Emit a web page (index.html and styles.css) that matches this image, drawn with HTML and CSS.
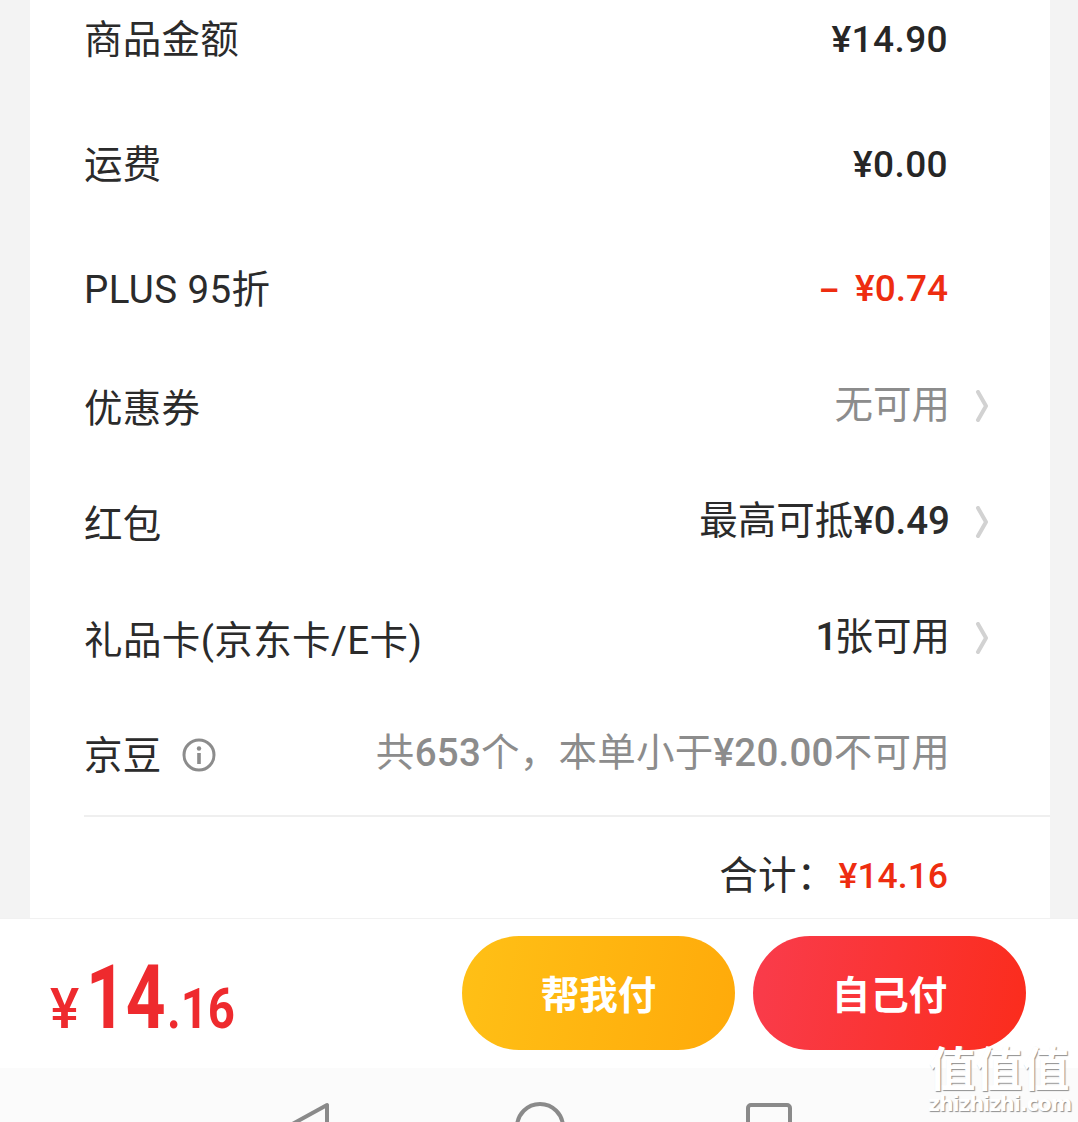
FILE: index.html
```html
<!DOCTYPE html>
<html lang="zh-CN">
<head>
    <meta charset="UTF-8">
    <meta name="viewport" content="width=device-width, initial-scale=1.0">
    <title>订单结算</title>
    <link rel="stylesheet" href="styles.css">
</head>
<body>
    <div class="page">
        <main class="card">
            <div class="row row-tall">
                <span class="label">商品金额</span>
                <span class="amount">¥14.90</span>
            </div>
            <div class="row row-tall">
                <span class="label">运费</span>
                <span class="amount">¥0.00</span>
            </div>
            <div class="row row-tall">
                <span class="label label-latin">PLUS 95折</span>
                <span class="amount amount-red amount-discount"><span class="minus">–</span>¥0.74</span>
            </div>
            <div class="row">
                <span class="label">优惠券</span>
                <span class="value value-grey">无可用</span>
                <svg class="chevron" viewBox="0 0 14 32"><path d="M3 2l8 14-8 14" fill="none" stroke="#d2d2d2" stroke-width="4" stroke-linecap="round" stroke-linejoin="round"/></svg>
            </div>
            <div class="row">
                <span class="label">红包</span>
                <span class="value">最高可抵<span class="num">¥0.49</span></span>
                <svg class="chevron" viewBox="0 0 14 32"><path d="M3 2l8 14-8 14" fill="none" stroke="#d2d2d2" stroke-width="4" stroke-linecap="round" stroke-linejoin="round"/></svg>
            </div>
            <div class="row">
                <span class="label label-latin">礼品卡(京东卡/E卡)</span>
                <span class="value"><span class="num num-one">1</span>张可用</span>
                <svg class="chevron" viewBox="0 0 14 32"><path d="M3 2l8 14-8 14" fill="none" stroke="#d2d2d2" stroke-width="4" stroke-linecap="round" stroke-linejoin="round"/></svg>
            </div>
            <div class="row row-beans">
                <span class="label">京豆</span>
                <svg class="info" viewBox="0 0 34 34">
                    <circle cx="17" cy="17" r="15" fill="none" stroke="#8c8c8c" stroke-width="3"/>
                    <circle cx="17" cy="10.5" r="2.2" fill="#8c8c8c"/>
                    <rect x="15.2" y="15" width="3.6" height="11" fill="#8c8c8c"/>
                </svg>
                <span class="value value-grey">共<span class="num">653</span>个，本单小于<span class="num">¥20.00</span>不可用</span>
            </div>
            <div class="total">
                <span class="total-label">合计：</span>
                <span class="amount amount-red amount-total">¥14.16</span>
            </div>
        </main>

        <footer class="paybar">
            <div class="price">
                <span class="price-sign">¥</span><span class="price-int">14</span><span class="price-dec">.16</span>
            </div>
            <div class="buttons">
                <button class="btn btn-yellow">帮我付</button>
                <button class="btn btn-red">自己付</button>
            </div>
        </footer>

        <nav class="navbar">
            <svg class="nav-back" viewBox="0 0 50 50"><path d="M44 3v44L4 25z" fill="none" stroke="#8a8a8a" stroke-width="4" stroke-linejoin="round"/></svg>
            <svg class="nav-home" viewBox="0 0 50 50"><circle cx="25" cy="25" r="23" fill="none" stroke="#8a8a8a" stroke-width="4"/></svg>
            <svg class="nav-recent" viewBox="0 0 50 50"><rect x="4" y="3" width="42" height="42" rx="3" fill="none" stroke="#8a8a8a" stroke-width="4"/></svg>
        </nav>

        <div class="watermark">
            <div class="wm-mark">值值值</div>
            <div class="wm-site">zhizhizhi.com</div>
        </div>
    </div>
</body>
</html>
```

FILE: styles.css
```css
* {
    box-sizing: border-box;
}
html, body {
    margin: 0;
    padding: 0;
}
body {
    font-family: Roboto, "Noto Sans CJK SC", sans-serif;
    background-color: #f3f3f3;
    color: #262626;
}
.page {
    position: relative;
    width: 1078px;
    height: 1122px;
    overflow: hidden;
    display: flex;
    flex-direction: column;
}
.card {
    height: 918px;
    margin: 0 28px 0 30px;
    padding-left: 54px;
    background-color: #fff;
    display: flex;
    flex-direction: column;
    justify-content: flex-end;
    flex-shrink: 0;
}
.row {
    height: 116px;
    flex-shrink: 0;
    display: flex;
    align-items: center;
    padding-right: 100px;
    position: relative;
}
.row-tall {
    height: 125px;
    padding-right: 102px;
}
.row-beans {
    height: 118px;
    padding-right: 100px;
}
.label {
    font-size: 38.5px;
    line-height: 50px;
    letter-spacing: 0.25px;
    color: #2b2b2b;
    margin-right: auto;
    padding-top: 4px;
}
.row-tall .label {
    padding-top: 6px;
}
.label-latin {
    letter-spacing: 0.4px;
}
.row-beans .label {
    margin-right: 20px;
    padding-top: 0;
}
.amount {
    font-size: 37px;
    font-weight: 500;
    line-height: 50px;
    letter-spacing: 0.4px;
    color: #262626;
    padding-top: 6px;
}
.amount-red {
    color: #ee2d10;
}
.amount-discount {
    letter-spacing: 0;
}
.minus {
    font-size: 32px;
    font-weight: 700;
    margin-right: 16px;
}
.value {
    font-size: 38.5px;
    line-height: 50px;
    color: #2b2b2b;
    padding-bottom: 4px;
}
.row-beans .value {
    margin-left: auto;
    padding-bottom: 6px;
    letter-spacing: 0.25px;
}
.value-grey {
    color: #8c8c8c;
}
.num {
    font-weight: 500;
}
.num-one {
    letter-spacing: -3px;
}
.chevron {
    position: absolute;
    right: 61px;
    top: 41px;
    width: 14px;
    height: 32px;
}
.info {
    width: 34px;
    height: 34px;
    margin-bottom: 2px;
}
.total {
    height: 103px;
    padding-right: 102px;
    padding-bottom: 17px;
    border-top: 2px solid #efefef;
    display: flex;
    align-items: flex-end;
    justify-content: flex-end;
    flex-shrink: 0;
}
.total-label {
    font-size: 38.5px;
    line-height: 50px;
    letter-spacing: 0.25px;
    color: #2b2b2b;
    margin-right: 3px;
}
.amount-total {
    font-size: 35.5px;
    letter-spacing: 0;
    padding-top: 0;
}
.paybar {
    height: 150px;
    flex-shrink: 0;
    background-color: #fff;
    border-top: 1px solid #f1f1f1;
    padding: 17px 52px 0 50px;
    display: flex;
    justify-content: space-between;
}
.price {
    color: #ee2a2e;
    font-weight: 500;
    display: flex;
    align-items: baseline;
    height: 100px;
    line-height: 1;
    padding-top: 17px;
}
.price-sign {
    font-size: 55px;
    margin-right: 7px;
}
.price-int {
    display: inline-block;
    width: 81px;
    font-size: 89px;
    font-weight: 700;
    transform: scaleX(0.78);
    transform-origin: left;
}
.price-dec {
    display: inline-block;
    width: 68px;
    font-size: 55px;
    font-weight: 700;
    transform: scaleX(0.86);
    transform-origin: left;
}
.buttons {
    display: flex;
    gap: 18px;
}
.btn {
    width: 273px;
    height: 114px;
    border: none;
    border-radius: 57px;
    color: #fff;
    font-family: "Noto Sans CJK SC", sans-serif;
    font-size: 38.5px;
    font-weight: 700;
    padding: 0 0 3px;
}
.btn-yellow {
    background: linear-gradient(100deg, #ffc016, #ffaa0a);
}
.btn-red {
    background: linear-gradient(100deg, #f93c4c, #fb2c1c);
}
.navbar {
    flex: 1;
    background-color: #fbfbfb;
    padding: 34px 0 0 283px;
    display: flex;
    align-items: flex-start;
    gap: 182px;
}
.navbar svg {
    width: 50px;
    height: 50px;
    flex-shrink: 0;
}
.nav-recent {
    margin-left: -3px;
}
.watermark {
    position: absolute;
    right: 8px;
    top: 1039px;
    width: 142px;
    text-align: center;
    color: #fff;
    text-shadow: 1px 1px 1px #8f8f8f;
}
.wm-mark {
    font-family: "Noto Sans CJK SC", sans-serif;
    font-size: 47px;
    font-weight: 700;
    line-height: 54px;
    white-space: nowrap;
}
.wm-site {
    font-family: "DejaVu Sans", sans-serif;
    font-size: 20.5px;
    font-weight: 700;
    line-height: 20px;
    margin-top: 1px;
    white-space: nowrap;
    letter-spacing: -1px;
}
```
